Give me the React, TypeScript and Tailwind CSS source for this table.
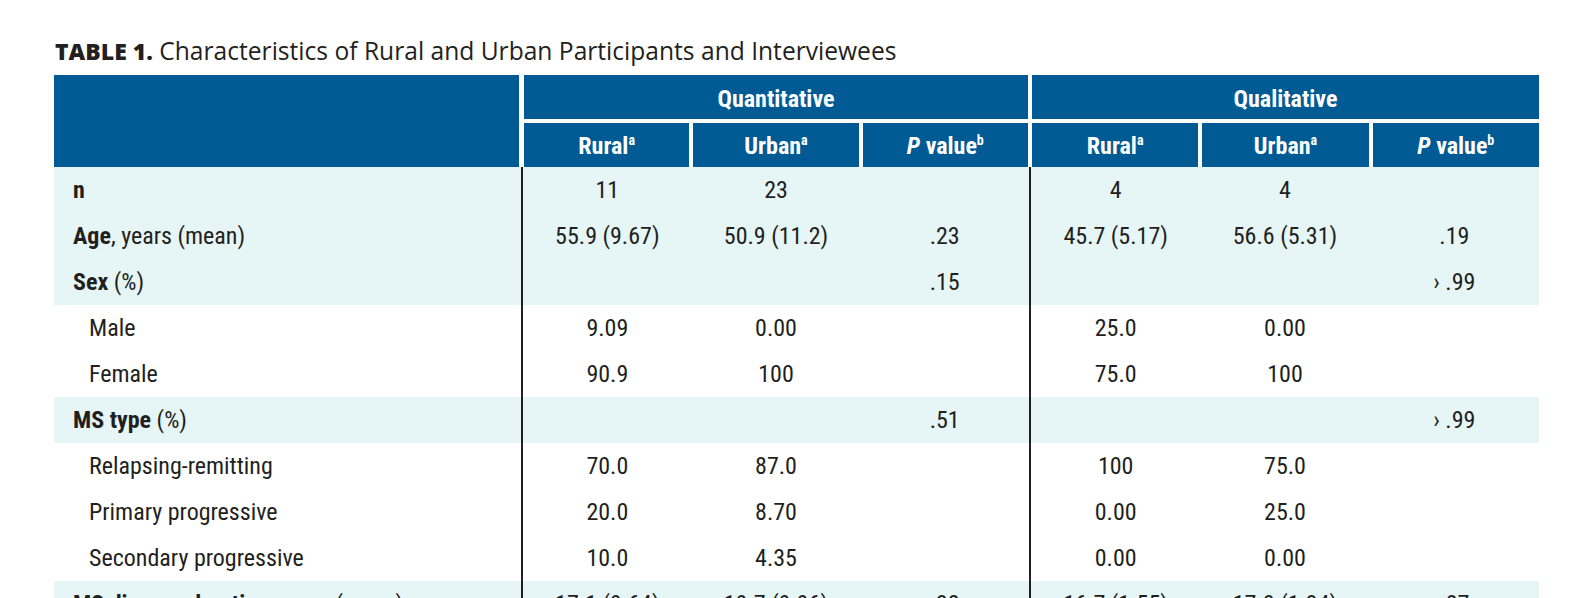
import React from "react";

type Row = {
  label: React.ReactNode;
  indent?: boolean;
  vals: string[];
  shaded?: boolean;
};

const rows: Row[] = [
  { label: <b className="font-bold">n</b>, vals: ["11", "23", "", "4", "4", ""], shaded: true },
  {
    label: (
      <>
        <b className="font-bold">Age</b>, years (mean)
      </>
    ),
    vals: ["55.9 (9.67)", "50.9 (11.2)", ".23", "45.7 (5.17)", "56.6 (5.31)", ".19"],
    shaded: true,
  },
  {
    label: (
      <>
        <b className="font-bold">Sex</b> (%)
      </>
    ),
    vals: ["", "", ".15", "", "", "› .99"],
    shaded: true,
  },
  { label: "Male", indent: true, vals: ["9.09", "0.00", "", "25.0", "0.00", ""] },
  { label: "Female", indent: true, vals: ["90.9", "100", "", "75.0", "100", ""] },
  {
    label: (
      <>
        <b className="font-bold">MS type</b> (%)
      </>
    ),
    vals: ["", "", ".51", "", "", "› .99"],
    shaded: true,
  },
  { label: "Relapsing-remitting", indent: true, vals: ["70.0", "87.0", "", "100", "75.0", ""] },
  { label: "Primary progressive", indent: true, vals: ["20.0", "8.70", "", "0.00", "25.0", ""] },
  { label: "Secondary progressive", indent: true, vals: ["10.0", "4.35", "", "0.00", "0.00", ""] },
  {
    label: (
      <>
        <b className="font-bold">MS disease duration</b>, years (mean)
      </>
    ),
    vals: ["17.1 (9.64)", "19.7 (9.96)", ".38", "16.7 (1.55)", "17.0 (1.34)", ".87"],
    shaded: true,
  },
];

function Sup({ c }: { c: string }) {
  return <sup className="-top-[9px] text-[14px] font-bold">{c}</sup>;
}

function SubHeads() {
  return (
    <div className="mt-1 flex h-[44px] gap-1">
      <div className="flex flex-1 items-center justify-center bg-[#005a93] pt-[2px]">
        <span>
          Rural
          <Sup c="a" />
        </span>
      </div>
      <div className="flex flex-1 items-center justify-center bg-[#005a93] pt-[2px]">
        <span>
          Urban
          <Sup c="a" />
        </span>
      </div>
      <div className="flex flex-1 items-center justify-center bg-[#005a93] pt-[2px]">
        <span>
          <i className="italic">P</i> value
          <Sup c="b" />
        </span>
      </div>
    </div>
  );
}

export default function App() {
  return (
    <div className="min-h-screen bg-white pl-[54px] pt-[35px] text-[#231f20]">
      <h1 className="h-[32px] pl-[1px] font-['Open_Sans',sans-serif] text-[24.6px] leading-[32px] font-normal">
        <span className="text-[23px] font-extrabold">TABLE 1.</span> Characteristics of Rural and Urban Participants and
        Interviewees
      </h1>

      <div className="mt-[8px] w-[1485px] font-['Roboto',sans-serif] font-stretch-condensed">
        {/* header */}
        <div className="flex h-[92px] text-[24px] font-bold text-white">
          <div className="w-[465px] bg-[#005a93]" />
          <div className="ml-[5px] flex w-[504px] flex-col">
            <div className="flex h-[44px] items-center justify-center bg-[#005a93] pt-[3px]">Quantitative</div>
            <SubHeads />
          </div>
          <div className="ml-[4px] flex w-[507px] flex-col">
            <div className="flex h-[44px] items-center justify-center bg-[#005a93] pt-[3px]">Qualitative</div>
            <SubHeads />
          </div>
        </div>

        {/* body */}
        <div className="text-[24px]">
          {rows.map((r, i) => (
            <div key={i} className={`flex h-[46px] ${r.shaded ? "bg-[#e6f5f6]" : "bg-white"}`}>
              <div className={`flex w-[467px] items-center ${r.indent ? "pl-[35px]" : "pl-[19px]"}`}>
                <span>{r.label}</span>
              </div>
              <div className="flex w-[508px] border-l-2 border-[#231f20]">
                {r.vals.slice(0, 3).map((v, j) => (
                  <div key={j} className="flex flex-1 items-center justify-center">
                    {v}
                  </div>
                ))}
              </div>
              <div className="flex w-[510px] border-l-2 border-[#231f20]">
                {r.vals.slice(3).map((v, j) => (
                  <div key={j} className="flex flex-1 items-center justify-center">
                    {v}
                  </div>
                ))}
              </div>
            </div>
          ))}
        </div>
      </div>
    </div>
  );
}
